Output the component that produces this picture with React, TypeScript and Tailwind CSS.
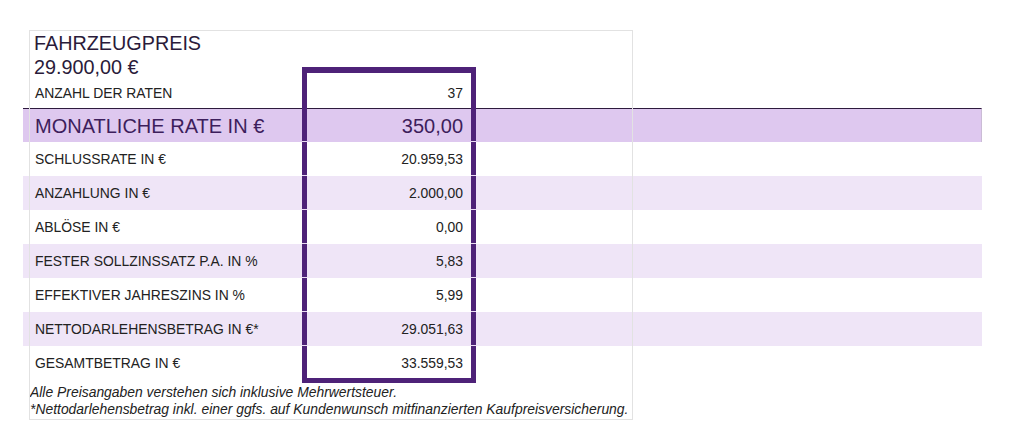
import React from "react";

const rows: { label: string; value: string; shade: boolean }[] = [
  { label: "SCHLUSSRATE IN €", value: "20.959,53", shade: false },
  { label: "ANZAHLUNG IN €", value: "2.000,00", shade: true },
  { label: "ABLÖSE IN €", value: "0,00", shade: false },
  { label: "FESTER SOLLZINSSATZ P.A. IN %", value: "5,83", shade: true },
  { label: "EFFEKTIVER JAHRESZINS IN %", value: "5,99", shade: false },
  { label: "NETTODARLEHENSBETRAG IN €*", value: "29.051,63", shade: true },
  { label: "GESAMTBETRAG IN €", value: "33.559,53", shade: false },
];

const ticks = [111, 145, 179, 213, 247, 281, 315];

export default function App() {
  return (
    <div className="w-[1024px] h-[426px] bg-white pt-[30px] pl-[29px] font-['Liberation_Sans',Arial,sans-serif] text-[#222]">
      <div className="relative w-[604px] h-[390px] pt-[1px] pl-[1px]">
        <div className="flex flex-col">
          <div className="pl-[4px] text-[19.8px] leading-[24px] text-[#2a1b3a]">FAHRZEUGPREIS</div>
          <div className="pl-[4px] text-[19.8px] leading-[24px] text-[#2a1b3a]">29.900,00 €</div>
          <div className="flex h-[29px] items-center text-[13.9px]">
            <div className="w-[273px] pl-[5px]">ANZAHL DER RATEN</div>
            <div className="w-[174px] pr-[14px] text-right">37</div>
          </div>
          <div className="ml-[-7px] w-[959px] flex flex-col">
            <div className="flex h-[34px] items-center border-t border-[#2d1a3d] bg-[#dec8ef] text-[20px] text-[#3d1e5c] border-r border-r-[#cbbcd6]">
              <div className="w-[280px] pl-[12px]">MONATLICHE RATE IN €</div>
              <div className="w-[174px] pr-[14px] text-right">350,00</div>
            </div>
            {rows.map((r) => (
              <div
                key={r.label}
                className={`flex h-[34px] items-center text-[13.9px] ${r.shade ? "bg-[#efe5f7]" : "bg-white"}`}
              >
                <div className="w-[280px] pl-[12px]">{r.label}</div>
                <div className="w-[174px] pr-[14px] text-right">{r.value}</div>
              </div>
            ))}
          </div>
          <div className="mt-[4px] text-[13.9px] leading-[17px] italic text-[#222] whitespace-nowrap">
            <div>Alle Preisangaben verstehen sich inklusive Mehrwertsteuer.</div>
            <div>*Nettodarlehensbetrag inkl. einer ggfs. auf Kundenwunsch mitfinanzierten Kaufpreisversicherung.</div>
          </div>
        </div>
        <div className="pointer-events-none absolute inset-0 border border-[#e2e2e2]" />
        <div className="pointer-events-none absolute left-[273px] top-[37px] w-[174px] h-[316px] border-[5px] border-t-[6px] border-[#4e2278]" />
        {ticks.map((t) => (
          <React.Fragment key={t}>
            <div className="pointer-events-none absolute left-[273px] w-[5px] h-[1px] bg-[#e9dcf2]" style={{ top: t }} />
            <div className="pointer-events-none absolute left-[442px] w-[5px] h-[1px] bg-[#e9dcf2]" style={{ top: t }} />
          </React.Fragment>
        ))}
      </div>
    </div>
  );
}
